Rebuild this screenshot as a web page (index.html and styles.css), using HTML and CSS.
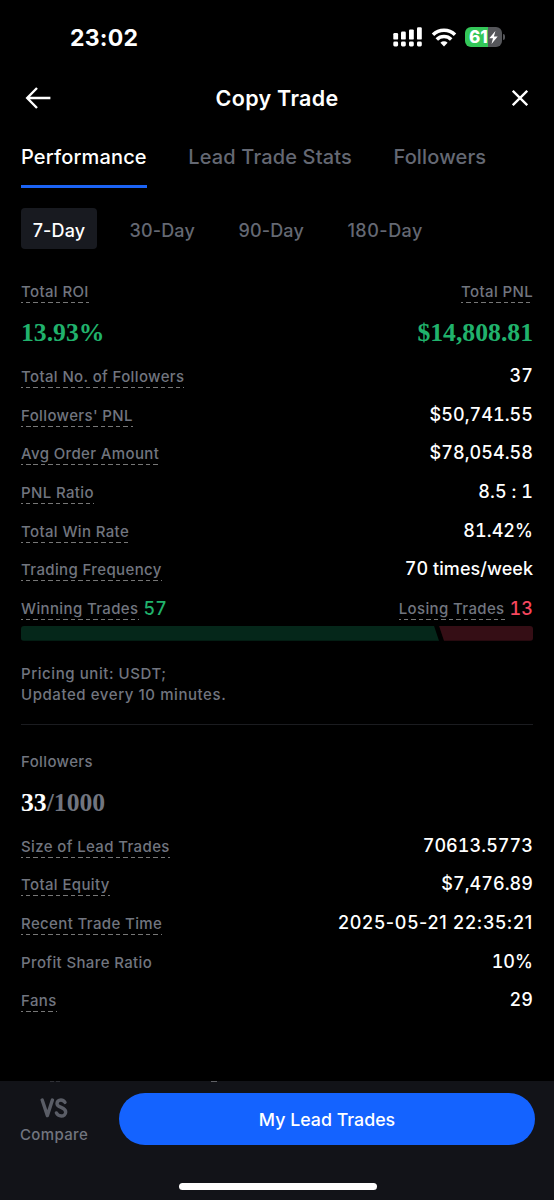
FILE: index.html
```html
<!DOCTYPE html>
<html lang="en">
<head>
  <meta charset="UTF-8" />
  <meta name="viewport" content="width=device-width, initial-scale=1" />
  <title>Copy Trade</title>
  <link rel="stylesheet" href="styles.css">
</head>
<body>
  <div class="status-bar">
    <span class="clock">23:02</span>
    <div class="status-icons">
      <svg width="30" height="20" viewBox="0 0 30 20" fill="#fff" aria-label="Signal">
        <rect x="0.3" y="6" width="4.8" height="6.6" rx="1.2"/>
        <rect x="8" y="4.6" width="4.8" height="8" rx="1.2"/>
        <rect x="16" y="2.4" width="4.8" height="10.2" rx="1.2"/>
        <rect x="24" y="0.2" width="4.8" height="12.4" rx="1.2"/>
        <rect x="0.3" y="14.6" width="4.8" height="4.8" rx="1.4"/>
        <rect x="8" y="14.6" width="4.8" height="4.8" rx="1.4"/>
        <rect x="16" y="14.6" width="4.8" height="4.8" rx="1.4"/>
        <rect x="24" y="14.6" width="4.8" height="4.8" rx="1.4"/>
      </svg>
      <svg class="wifi" width="26" height="19" viewBox="0 0 26 19" fill="none" stroke="#fff" stroke-width="3.5" aria-label="Wi-Fi">
        <path d="M2 6.7a15.6 15.6 0 0 1 22 0"/>
        <path d="M5.8 11.4a10.2 10.2 0 0 1 14.4 0"/>
        <path d="M13 18.4l-3.6-3.6a5.2 5.2 0 0 1 7.2 0z" fill="#fff" stroke="none"/>
      </svg>
      <div class="battery">
        <span>61</span>
        <svg width="9" height="13" viewBox="0 0 9 13" fill="#fff"><path d="M6.4 0L0.3 7.2H4L2.5 13L8.7 5.5H4.9z"/></svg>
      </div>
    </div>
  </div>

  <header class="header">
    <svg width="26" height="22" viewBox="0 0 26 22" fill="none" stroke="#fff" stroke-width="2.4" aria-label="Back">
      <path d="M25.4 11H2.2M12 1L2.2 11L12 21"/>
    </svg>
    <h1>Copy Trade</h1>
    <svg width="16" height="16" viewBox="0 0 16 16" fill="none" stroke="#fff" stroke-width="2.3" aria-label="Close">
      <path d="M0.8 0.8L15.2 15.2M15.2 0.8L0.8 15.2"/>
    </svg>
  </header>

  <nav class="tabs">
    <a class="active">Performance</a>
    <a>Lead Trade Stats</a>
    <a>Followers</a>
  </nav>

  <div class="periods">
    <button class="active">7-Day</button>
    <button>30-Day</button>
    <button>90-Day</button>
    <button>180-Day</button>
  </div>

  <main>
    <section class="performance">
      <div class="summary">
        <div>
          <span class="label tip">Total ROI</span>
          <strong>13.93%</strong>
        </div>
        <div class="right">
          <span class="label tip">Total PNL</span>
          <strong>$14,808.81</strong>
        </div>
      </div>

      <div class="row"><span class="label tip">Total No. of Followers</span><span class="value">37</span></div>
      <div class="row"><span class="label tip">Followers' PNL</span><span class="value">$50,741.55</span></div>
      <div class="row"><span class="label tip">Avg Order Amount</span><span class="value">$78,054.58</span></div>
      <div class="row"><span class="label tip">PNL Ratio</span><span class="value">8.5 : 1</span></div>
      <div class="row"><span class="label tip">Total Win Rate</span><span class="value">81.42%</span></div>
      <div class="row"><span class="label tip">Trading Frequency</span><span class="value">70 times/week</span></div>
      <div class="row trades">
        <div><span class="label tip">Winning Trades</span><span class="value win">57</span></div>
        <div><span class="label tip">Losing Trades</span><span class="value loss">13</span></div>
      </div>
      <div class="ratio-bar">
        <div class="bar-win"></div>
        <div class="bar-loss"></div>
      </div>
      <p class="note">Pricing unit: USDT;<br>Updated every 10 minutes.</p>
    </section>

    <section class="lead">
      <span class="label">Followers</span>
      <strong class="count">33<em>/1000</em></strong>

      <div class="row"><span class="label tip">Size of Lead Trades</span><span class="value">70613.5773</span></div>
      <div class="row"><span class="label tip">Total Equity</span><span class="value">$7,476.89</span></div>
      <div class="row"><span class="label tip">Recent Trade Time</span><span class="value date">2025-05-21 22:35:21</span></div>
      <div class="row"><span class="label">Profit Share Ratio</span><span class="value">10%</span></div>
      <div class="row"><span class="label tip">Fans</span><span class="value">29</span></div>
    </section>
  </main>

  <footer class="footer">
    <div class="actions">
      <div class="compare">
        <svg width="28" height="20" viewBox="0 0 28 20" fill="none" stroke="#5a5d66" stroke-width="3.4" stroke-linecap="round" stroke-linejoin="round">
          <path d="M2.2 2L7.4 17.6L12.4 2"/>
          <path d="M25 4.4C23.8 2.6 22.6 2 20.9 2C18.4 2 17 3.6 17 5.5C17 10.3 25.7 8.6 25.7 14C25.7 16.4 23.8 18 21.2 18C18.8 18 17.3 17 16.4 14.9"/>
        </svg>
        <span>Compare</span>
      </div>
      <button class="primary">My Lead Trades</button>
    </div>
    <div class="home-indicator"></div>
  </footer>
</body>
</html>
```

FILE: styles.css
```css
* {
  box-sizing: border-box;
}
body {
  margin: 0;
  height: 1200px;
  display: flex;
  flex-direction: column;
  overflow: hidden;
  background: #000;
  color: #fff;
  font-family: Inter, sans-serif;
}
button {
  border: none;
  background: none;
  padding: 0;
  font-family: inherit;
}

/* status bar */
.status-bar {
  height: 74px;
  padding: 0 52px 0 70px;
  display: flex;
  align-items: center;
  justify-content: space-between;
}
.clock {
  padding-top: 2px;
  font-size: 23px;
  font-weight: 700;
  letter-spacing: 0.25px;
}
.status-icons {
  display: flex;
  align-items: center;
}
.wifi {
  margin: 0 8px 0 8px;
}
.battery {
  position: relative;
  width: 37px;
  height: 20px;
  display: flex;
  align-items: center;
  justify-content: center;
  gap: 1px;
  border-radius: 6px;
  background: linear-gradient(90deg, #34c759 61%, #55565a 61%);
  font-size: 17px;
  font-weight: 800;
}
.battery::after {
  content: "";
  position: absolute;
  right: -3px;
  top: 7px;
  width: 2px;
  height: 6px;
  border-radius: 0 2px 2px 0;
  background: #55565a;
}

/* title */
.header {
  height: 47px;
  padding: 0 26px 0 25px;
  display: flex;
  align-items: center;
  justify-content: space-between;
}
.header h1 {
  margin: 0 9px 0 0;
  font-size: 21.5px;
  font-weight: 600;
  letter-spacing: 0.3px;
}

.tabs {
  height: 67px;
  padding: 0 21px;
  display: flex;
  gap: 41.5px;
}
.tabs a {
  height: 67px;
  padding-top: 23px;
  border-bottom: 3px solid transparent;
  font-size: 20px;
  line-height: 26px;
  font-weight: 500;
  letter-spacing: 0.15px;
  color: #646873;
  white-space: nowrap;
}
.tabs a.active {
  color: #fff;
  border-color: #1b63f5;
}

.periods {
  height: 41px;
  margin: 20px 21px 0;
  display: flex;
  gap: 19.5px;
}
.periods button {
  padding: 3px 12px 0;
  font-size: 18px;
  font-weight: 500;
  letter-spacing: 0.15px;
  white-space: nowrap;
  color: #646873;
}
.periods button.active {
  width: 76px;
  padding: 3px 0 0;
  margin-right: 1px;
  border-radius: 4px;
  background: #181a20;
  color: #fff;
}
.periods button:last-child {
  letter-spacing: 0.5px;
}

main {
  flex: 1;
  padding: 0 21px;
}
.label {
  font-size: 15px;
  line-height: 20px;
  font-weight: 500;
  letter-spacing: 0.37px;
  color: #71757f;
  white-space: nowrap;
}
/* dashed underline on labels with an explanation */
.tip {
  padding: 1px 0;
  background: repeating-linear-gradient(90deg, #777 0 2px, transparent 2px 5px, #777 5px 7.5px) left bottom / 100% 1px no-repeat;
}
.value {
  font-size: 18px;
  line-height: 22px;
  font-weight: 500;
  letter-spacing: 0.05px;
  font-variant-numeric: tabular-nums;
}
.date {
  font-variant-numeric: normal;
  letter-spacing: 0.73px;
}
.win {
  color: #20b26c;
}
.loss {
  color: #f6465d;
}

.summary {
  height: 112px;
  padding-top: 32px;
  display: flex;
  justify-content: space-between;
}
.summary > div {
  display: flex;
  flex-direction: column;
  align-items: flex-start;
}
.summary > .right {
  align-items: flex-end;
}
.summary strong,
.count {
  font-family: "Liberation Serif", serif;
  font-size: 25.7px;
  line-height: 30px;
  font-weight: 700;
  color: #20b26c;
}
.summary strong {
  margin-top: 15px;
}

.row {
  height: 38.65px;
  padding-top: 5px;
  display: flex;
  justify-content: space-between;
  align-items: flex-start;
}
.row > .value {
  margin-top: -1px;
}
.row > .label:not(.tip) {
  padding-top: 1px;
}
.trades {
  height: 33px;
}
.trades > div {
  display: flex;
  gap: 5px;
}

.ratio-bar {
  height: 15px;
  display: flex;
  border-radius: 3px;
  overflow: hidden;
}
.bar-win {
  width: 418px;
  background: #05271a;
  clip-path: polygon(0 0, calc(100% - 5px) 0, 100% 100%, 0 100%);
}
.bar-loss {
  flex: 1;
  background: #350e15;
  clip-path: polygon(0 0, 100% 0, 100% 100%, 5px 100%);
}

.note {
  margin: 22px 0 0;
  height: 61px;
  font-size: 15px;
  line-height: 21px;
  font-weight: 500;
  letter-spacing: 0.57px;
  color: #71757f;
}

.lead {
  border-top: 1px solid #1b1c20;
  padding-top: 27px;
}
.lead > .label {
  display: block;
}
.count {
  display: block;
  margin: 16px 0 13px;
  color: #fff;
}
.count em {
  font-style: normal;
  color: #71757f;
}

/* bottom bar */
.footer {
  position: relative;
  height: 119px;
  padding: 12px 19px 0 20px;
  background: #121318;
}
/* tops of the next heading showing above the bar */
.footer::before,
.footer::after {
  content: "";
  position: absolute;
  top: 0;
  height: 1px;
}
.footer::before {
  left: 50px;
  width: 10px;
  background: linear-gradient(90deg, #303137 4px, transparent 4px 6px, #303137 6px);
}
.footer::after {
  left: 211px;
  width: 6px;
  background: #606166;
}
.actions {
  height: 52px;
  display: flex;
  gap: 31px;
}
.compare {
  width: 68px;
  padding-top: 5px;
  display: flex;
  flex-direction: column;
  align-items: center;
  gap: 6px;
  font-size: 15px;
  line-height: 21px;
  font-weight: 500;
  letter-spacing: 0.35px;
  color: #71757f;
}
.primary {
  flex: 1;
  border-radius: 26px;
  background: #1463ff;
  color: #fff;
  font-size: 17.8px;
  font-weight: 500;
}
.home-indicator {
  width: 198px;
  height: 7px;
  margin: 38px auto 0;
  border-radius: 4px;
  background: #fff;
}
```
